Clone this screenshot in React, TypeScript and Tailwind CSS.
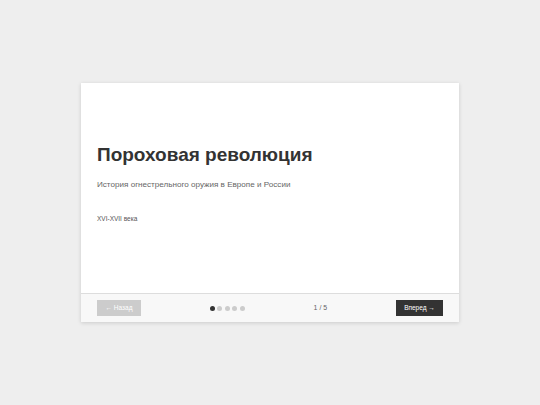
import React from "react";

export default function App() {
  return (
    <div
      className="w-[540px] h-[405px] bg-[#eeeeee] flex items-center justify-center"
      style={{ fontFamily: '"Liberation Sans", Arial, sans-serif' }}
    >
      <div className="w-[378px] h-[239px] bg-white flex flex-col shadow-[0_1px_4px_rgba(0,0,0,0.15)]">
        <div className="flex-1 flex flex-col px-4 pt-[60px]">
          <h1 className="text-[19px] leading-[23px] font-bold text-[#333333]">Пороховая революция</h1>
          <p className="mt-[13px] text-[8.1px] leading-[11px] text-[#666666]">
            История огнестрельного оружия в Европе и России
          </p>
          <p className="mt-[25px] text-[6.5px] leading-[8px] text-[#555555]">XVI-XVII века</p>
        </div>
        <div className="h-[29px] border-t border-[#dddddd] bg-[#f8f8f8] flex items-center justify-between px-4">
          <div className="w-[44px] h-[16px] bg-[#cccccc] text-white text-[6.5px] flex items-center justify-center">
            ← Назад
          </div>
          <div className="flex items-center gap-[2.5px]">
            <span className="w-[5px] h-[5px] rounded-full bg-[#333333]" />
            <span className="w-[5px] h-[5px] rounded-full bg-[#cccccc]" />
            <span className="w-[5px] h-[5px] rounded-full bg-[#cccccc]" />
            <span className="w-[5px] h-[5px] rounded-full bg-[#cccccc]" />
            <span className="w-[5px] h-[5px] rounded-full bg-[#cccccc]" />
          </div>
          <div className="text-[7px] text-[#666666]">1 / 5</div>
          <div className="w-[47px] h-[16px] bg-[#333333] text-white text-[6.5px] flex items-center justify-center">
            Вперед →
          </div>
        </div>
      </div>
    </div>
  );
}
